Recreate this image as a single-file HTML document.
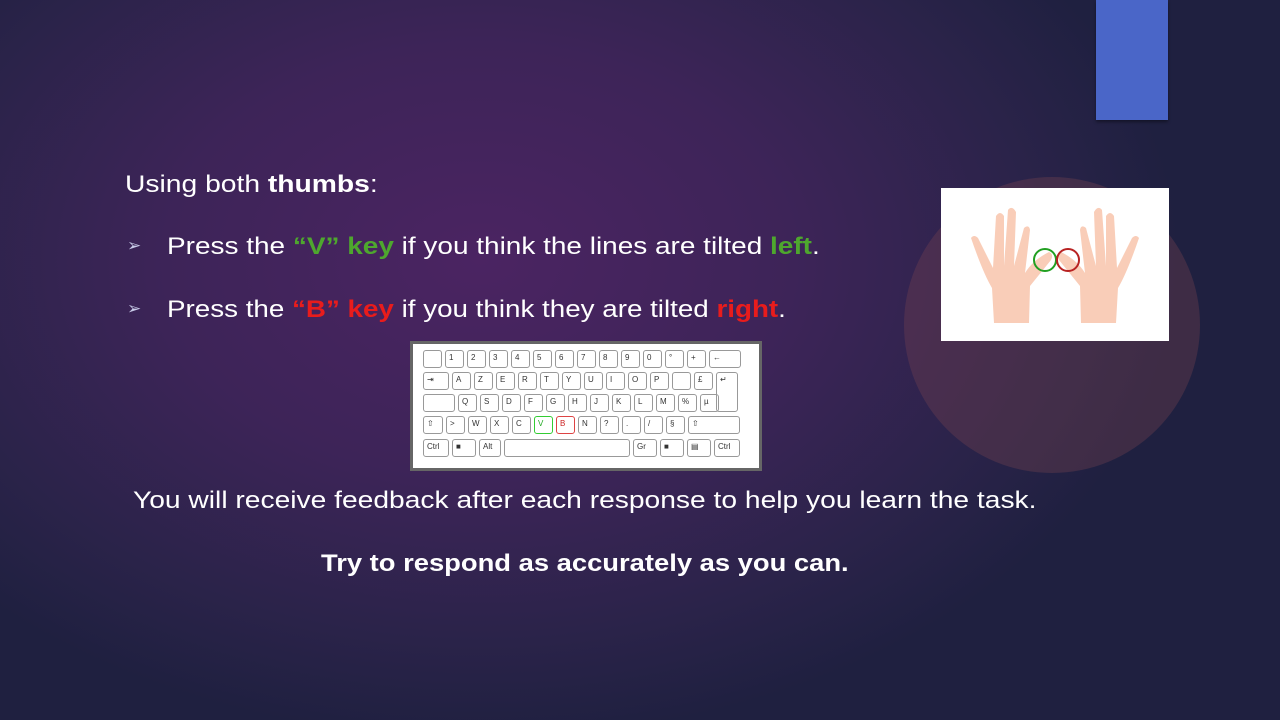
<!DOCTYPE html>
<html><head><meta charset="utf-8"><style>
body{margin:0;width:1280px;height:720px;overflow:hidden;font-family:"Liberation Sans",sans-serif;}
#bg{position:absolute;inset:0;background:radial-gradient(ellipse 700px 480px at 480px 260px,#4b2462 0%,#3d2458 45%,#2a2349 80%,#1f2040 100%);}
.t{position:absolute;color:#fff;font-size:24px;white-space:nowrap;transform-origin:0 50%;}
.g{color:#4ea72e;font-weight:bold}.r{color:#e81c1c;font-weight:bold}
.kb{position:absolute;left:410px;top:341px;width:346px;height:124px;border:3px solid #666;background:#fff;}
.row{position:absolute;left:10px;display:flex;gap:3px}
.k{height:18px;border:1px solid #999;border-radius:3px;box-sizing:border-box;font-size:8px;color:#333;padding:2px 3px;width:19px}
</style></head><body>
<div id="bg"></div>
<div style="position:absolute;left:904px;top:177px;width:296px;height:296px;border-radius:50%;background:rgba(120,70,80,0.35)"></div>
<div style="position:absolute;left:1096px;top:0;width:72px;height:120px;background:#4a66c8;box-shadow:0 2px 3px rgba(0,0,0,.4)"></div>
<div class="t" style="left:125px;top:171px;transform:scaleX(1.177)">Using both <b>thumbs</b>:</div>
<div class="t" style="left:127px;top:236px;font-size:17px;color:#c8cbe8">➢</div>
<div class="t" style="left:167px;top:233px;transform:scaleX(1.165)">Press the <span class="g">“V” key</span> if you think the lines are tilted <span class="g">left</span>.</div>
<div class="t" style="left:127px;top:299px;font-size:17px;color:#c8cbe8">➢</div>
<div class="t" style="left:167px;top:296px;transform:scaleX(1.157)">Press the <span class="r">“B” key</span> if you think they are tilted <span class="r">right</span>.</div>
<div class="kb">
<div class="row" style="top:6px"><div class="k"></div><div class="k">1</div><div class="k">2</div><div class="k">3</div><div class="k">4</div><div class="k">5</div><div class="k">6</div><div class="k">7</div><div class="k">8</div><div class="k">9</div><div class="k">0</div><div class="k">°</div><div class="k">+</div><div class="k" style="width:32px">←</div></div>
<div class="row" style="top:28px"><div class="k" style="width:26px">⇥</div><div class="k">A</div><div class="k">Z</div><div class="k">E</div><div class="k">R</div><div class="k">T</div><div class="k">Y</div><div class="k">U</div><div class="k">I</div><div class="k">O</div><div class="k">P</div><div class="k"></div><div class="k">£</div><div class="k" style="width:22px;height:40px">↵</div></div>
<div class="row" style="top:50px"><div class="k" style="width:32px"></div><div class="k">Q</div><div class="k">S</div><div class="k">D</div><div class="k">F</div><div class="k">G</div><div class="k">H</div><div class="k">J</div><div class="k">K</div><div class="k">L</div><div class="k">M</div><div class="k">%</div><div class="k">µ</div></div>
<div class="row" style="top:72px"><div class="k" style="width:20px">⇧</div><div class="k">&gt;</div><div class="k">W</div><div class="k">X</div><div class="k">C</div><div class="k" style="border-color:#3c3;color:#2a2">V</div><div class="k" style="border-color:#d44;color:#c22">B</div><div class="k">N</div><div class="k">?</div><div class="k">.</div><div class="k">/</div><div class="k">§</div><div class="k" style="width:52px">⇧</div></div>
<div class="row" style="top:95px"><div class="k" style="width:26px">Ctrl</div><div class="k" style="width:24px">■</div><div class="k" style="width:22px">Alt</div><div class="k" style="width:126px"></div><div class="k" style="width:24px">Gr</div><div class="k" style="width:24px">■</div><div class="k" style="width:24px">▤</div><div class="k" style="width:26px">Ctrl</div></div>
</div>
<div style="position:absolute;left:941px;top:188px;width:228px;height:153px;background:#fff">
<svg width="228" height="153" viewBox="0 0 228 153">
<g fill="#f9cdb8">
<path d="M53 135 L51 100 Q42 85 30 50 Q33 46 37 50 L52 80 L55 28 Q59 22 63 28 L63 78 L67 22 Q71 17 75 24 L73 78 L83 40 Q88 36 89 42 L84 85 Q92 72 108 64 Q113 66 110 72 L89 98 L88 135 Z"/>
<path d="M175 135 L177 100 Q186 85 198 50 Q195 46 191 50 L176 80 L173 28 Q169 22 165 28 L165 78 L161 22 Q157 17 153 24 L155 78 L145 40 Q140 36 139 42 L144 85 Q136 72 120 64 Q115 66 118 72 L139 98 L140 135 Z"/>
</g>
<circle cx="104" cy="72" r="11" fill="none" stroke="#22a022" stroke-width="2"/>
<circle cx="127" cy="72" r="11" fill="none" stroke="#b82222" stroke-width="2"/>
</svg></div>
<div class="t" style="left:133px;top:487px;transform:scaleX(1.175)">You will receive feedback after each response to help you learn the task.</div>
<div class="t" style="left:321px;top:550px;font-weight:bold;transform:scaleX(1.14)">Try to respond as accurately as you can.</div>
</body></html>
